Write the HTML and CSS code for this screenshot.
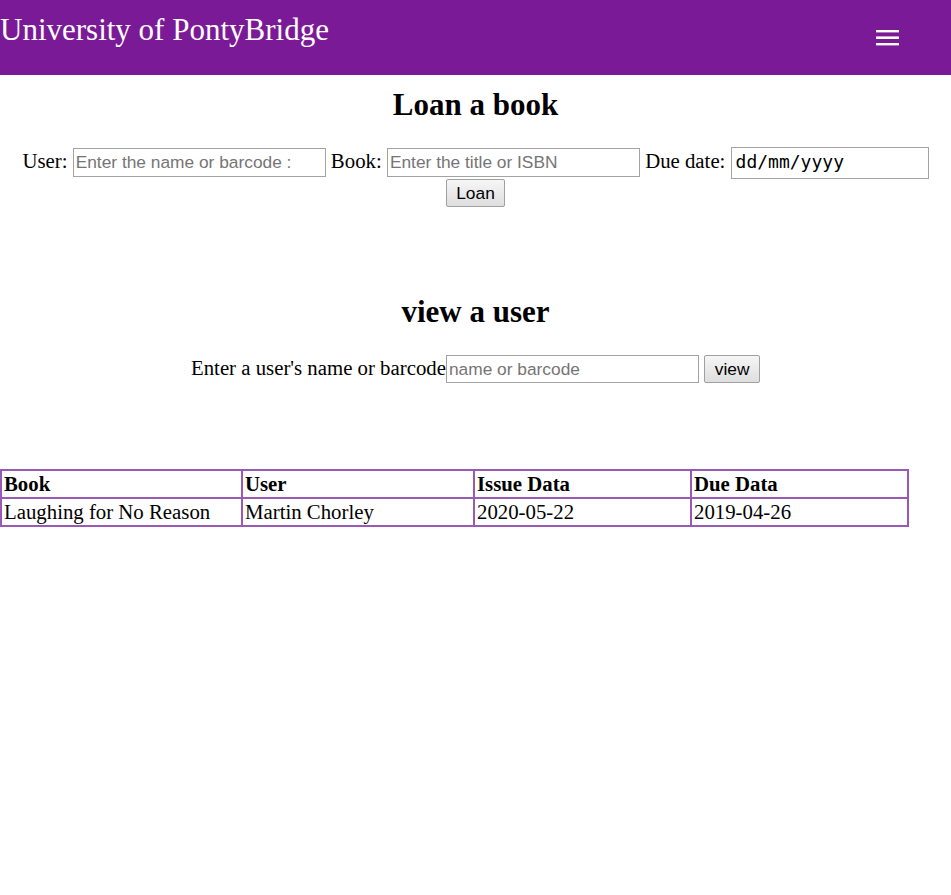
FILE: index.html
```html
<!DOCTYPE html>
<html>
<head>
<meta charset="utf-8">
<title>University of PontyBridge</title>
<link rel="stylesheet" href="styles.css">
</head>
<body>
<header class="topbar">
  <div class="brand">University of PontyBridge</div>
  <button class="menu" aria-label="menu">
    <svg width="23" height="16" viewBox="0 0 23 16"><rect x="0" y="0" width="23" height="2.4" fill="#fff"/><rect x="0" y="6.4" width="23" height="2.6" fill="#fff"/><rect x="0" y="13" width="23" height="2.4" fill="#fff"/></svg>
  </button>
</header>
<main>
  <section class="loan">
    <h1 class="title">Loan a book</h1>
    <form class="loan-form">
      <label>User:</label> <input class="field" type="text" placeholder="Enter the name or barcode :"> <label>Book:</label> <input class="field" type="text" placeholder="Enter the title or ISBN"> <label>Due date:</label> <input class="date" type="text" value="dd/mm/yyyy" readonly>
      <button class="btn" type="button">Loan</button>
    </form>
  </section>
  <section class="view">
    <h1 class="title">view a user</h1>
    <form class="view-form">
      <label>Enter a user's name or barcode</label><input class="field" type="text" placeholder="name or barcode"> <button class="btn" type="button">view</button>
    </form>
  </section>
  <table class="loans">
    <colgroup><col class="c1"><col class="c2"><col class="c3"><col class="c4"></colgroup>
    <thead>
      <tr><th>Book</th><th>User</th><th>Issue Data</th><th>Due Data</th></tr>
    </thead>
    <tbody>
      <tr><td>Laughing for No Reason</td><td>Martin Chorley</td><td>2020-05-22</td><td>2019-04-26</td></tr>
    </tbody>
  </table>
</main>
</body>
</html>
```
FILE: styles.css
```css
html, body {
  margin: 0;
  padding: 0;
  background: #fff;
}
body {
  font-family: "Liberation Serif", "Times New Roman", serif;
  font-size: 20.8px;
  color: #000;
}
.topbar {
  height: 75px;
  background: #7b1a96;
  display: flex;
  justify-content: space-between;
  align-items: flex-start;
}
.brand {
  color: #fff;
  font-size: 31px;
  line-height: 36px;
  padding-top: 12px;
}
.menu {
  background: none;
  border: 0;
  padding: 0;
  margin: 30px 52px 0 0;
  width: 23px;
  height: 16px;
  display: block;
}
.menu svg { display: block; }
.title {
  font-size: 31px;
  font-weight: bold;
  text-align: center;
  margin: 12px 0 0 0;
  line-height: 36px;
}
.loan-form, .view-form {
  text-align: center;
  margin: 0;
}
.loan-form { margin-top: 24px; line-height: 24px; }
.view-form { margin-top: 25px; }
.view .title { margin-top: 87px; }
.field {
  font-family: "Liberation Sans", Arial, sans-serif;
  font-size: 17.33px;
  width: 253px;
  height: 29px;
  box-sizing: border-box;
  border: 1px solid #a3a3a3;
  padding: 1px 2px;
  margin: 0;
  color: #000;
  vertical-align: baseline;
}
.field::placeholder { color: #757575; }
.view-form .field { height: 28px; }
.date {
  font-family: "DejaVu Sans Mono", monospace;
  font-size: 18px;
  width: 198px;
  height: 32px;
  box-sizing: border-box;
  border: 1px solid #a3a3a3;
  padding: 0 4px 3px 4px;
  margin: 0;
  color: #000;
}
.btn {
  font-family: "Liberation Sans", Arial, sans-serif;
  font-size: 17.33px;
  height: 28px;
  padding: 0 9.6px;
  border: 1px solid #a0a0a0;
  border-radius: 2px;
  background: linear-gradient(#f6f6f6, #dedede);
  color: #000;
  margin: 0;
}
.loans {
  margin-top: 86px;
  border-collapse: collapse;
  table-layout: fixed;
  width: 907px;
}
.loans col.c1 { width: 241px; }
.loans col.c2 { width: 232px; }
.loans col.c3 { width: 217px; }
.loans col.c4 { width: 217px; }
.loans th, .loans td {
  border: 2px solid #9b59b6;
  text-align: left;
  padding: 1px 2px;
  line-height: 24px;
  font-size: 20.8px;
}
.loans th { font-weight: bold; }
```
